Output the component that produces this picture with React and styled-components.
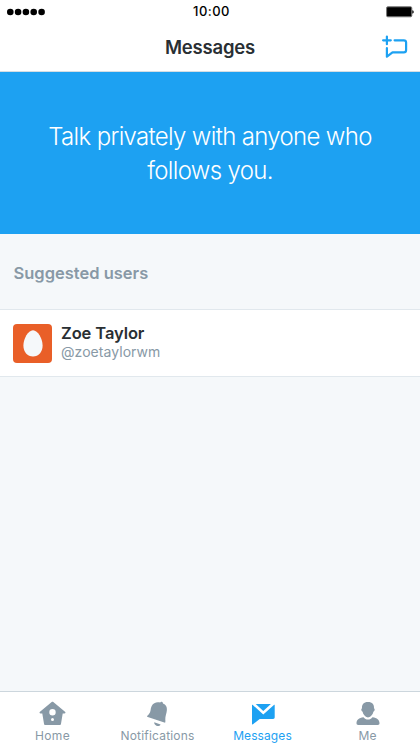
import styled, { createGlobalStyle } from 'styled-components';

const GlobalStyle = createGlobalStyle`
  * {
    box-sizing: border-box;
  }

  body {
    margin: 0;
    background: #f5f8fa;
    font-family: Inter, "Liberation Sans", sans-serif;
  }
`;

const HomeIcon = () => (
  <TabIcon viewBox="0 0 29 28">
    <path
      fillRule="evenodd"
      d="M13.700 2c.5-.4 1.100-.4 1.600 0L27 11.700c.9.8.4 1.700-.6 1.700h-1.700l-1.700 10.400c-.1.800-.6 1.200-1.300 1.200H7.300c-.7 0-1.200-.4-1.300-1.200L4.300 13.400H2.600c-1 0-1.500-.9-.6-1.700zM14.500 9.100a3.200 3.200 0 1 0 0 6.400 3.200 3.200 0 0 0 0-6.400zM14.500 17.900a1.500 1.500 0 1 0 0 3 1.500 1.500 0 0 0 0-3z"
    />
  </TabIcon>
);

const BellIcon = () => (
  <TabIcon viewBox="0 0 29 28">
    <path d="M17.2 2.600c.5-1.300 2.900-.8 2.800.9 2.900 1.100 4.100 3.400 3.900 6.500-.2 3.600-1.800 6.200-1.600 9.600.1 1.200.2 2.100-.2 3.200L4 16.700c.2-1.100 1.200-1.700 2-2.700 2.100-2.500 1.200-5.300 2.700-8.100 1.700-3.100 5.200-4.300 8.500-3.300z" />
    <path d="M11.200 22.300l6.400 2.100c-.7 1.500-2.200 2-3.700 1.500-1.600-.5-2.800-1.900-2.700-3.600z" />
  </TabIcon>
);

const EnvelopeIcon = () => (
  <TabIcon viewBox="0 0 29 28">
    <path d="M7.700 3.900h15.200l-7.600 7.100z" />
    <path d="M4 5.200c0-.4.500-.5.800-.2l10.500 9.600L25.900 5c.4-.3.800-.2.800.2v12.100c0 1-.6 1.600-1.600 1.600H11.700L5 24.200c-.5.400-1 .2-1-.4z" />
  </TabIcon>
);

const PersonIcon = () => (
  <TabIcon viewBox="0 0 29 28">
    <path d="M15 2c4.400 0 6.300 2.700 6 6.300 1.200.4.800 3-.6 3.400-.6 2.600-2.200 5-5.400 5.900-3.200-.9-4.800-3.300-5.400-5.900-1.400-.4-1.800-3-.6-3.400C8.700 4.700 10.600 2 15 2z" />
    <path d="M10.500 17.200c1.200 1.600 2.700 2.400 4.500 2.400s3.300-.8 4.500-2.400c4.600.8 7 2.500 7 6.100 0 1.100-.6 1.700-1.700 1.700H5.200c-1.100 0-1.700-.6-1.700-1.700 0-3.600 2.400-5.300 7-6.100z" />
  </TabIcon>
);

const tabs = [
  { label: 'Home', icon: HomeIcon, spacing: '0.35px' },
  { label: 'Notifications', icon: BellIcon, spacing: '0.2px' },
  { label: 'Messages', icon: EnvelopeIcon, active: true, spacing: '0.1px' },
  { label: 'Me', icon: PersonIcon, spacing: '0px' },
];

const App = () => {
  return (
    <Screen>
      <GlobalStyle />
      <StatusBar>
        <Signal viewBox="0 0 40 8">
          {[4.3, 12.1, 19.9, 27.7, 35.6].map((x) => (
            <circle key={x} cx={x} cy="4" r="3.3" />
          ))}
        </Signal>
        <Time>10:00</Time>
        <Battery viewBox="0 0 28 12">
          <rect x="0.6" y="0.8" width="25.2" height="10" rx="1.2" fill="#000" stroke="#777" strokeWidth="1" />
          <path d="M26.300 4.200c1.900.3 1.900 3.100 0 3.400z" />
        </Battery>
      </StatusBar>
      <Header>
        <Title>Messages</Title>
        <ComposeIcon viewBox="0 0 28 26">
          <path d="M5.900 2.500v7.700M2.100 6.300h7.700" />
          <path d="M13.600 6.300h9.200c1.500 0 2.300.8 2.300 2.300v7.300c0 1.600-.8 2.400-2.300 2.400H11.500l-5.600 4.400v-8.500" />
        </ComposeIcon>
      </Header>
      <Banner>
        <BannerLine>Talk privately with anyone who</BannerLine>
        <BannerLine>follows you.</BannerLine>
      </Banner>
      <SectionTitle>Suggested users</SectionTitle>
      <UserRow>
        <Avatar>
          <Egg viewBox="0 0 20 27">
            <path d="M10 .3c4.800 0 9.600 8.500 9.600 15.200 0 6.500-4 11-9.600 11s-9.600-4.500-9.600-11C.4 8.800 5.200.3 10 .3z" />
          </Egg>
        </Avatar>
        <UserText>
          <UserName>Zoe Taylor</UserName>
          <Handle>@zoetaylorwm</Handle>
        </UserText>
      </UserRow>
      <Spacer />
      <TabBar>
        {tabs.map(({ label, icon: Icon, active, spacing }) => (
          <Tab key={label} $active={active}>
            <Icon />
            <TabLabel $spacing={spacing}>{label}</TabLabel>
          </Tab>
        ))}
      </TabBar>
    </Screen>
  );
};

const Screen = styled.div`
  display: flex;
  flex-direction: column;
  width: 420px;
  height: 747px;
  overflow: hidden;
  background: #f5f8fa;
`;

const StatusBar = styled.div`
  display: grid;
  grid-template-columns: 1fr auto 1fr;
  align-items: center;
  height: 23px;
  padding: 0 6px;
  background: #fff;
`;

const Signal = styled.svg`
  width: 40px;
  height: 8px;
`;

const Time = styled.div`
  padding-left: 3px;
  font-size: 13px;
  font-weight: 500;
  line-height: 23px;
  letter-spacing: 0.5px;
  color: #000;
`;

const Battery = styled.svg`
  justify-self: end;
  width: 28px;
  height: 12px;
`;

const Header = styled.header`
  display: grid;
  grid-template-columns: 1fr auto 1fr;
  align-items: center;
  height: 49px;
  padding: 0 11px;
  border-bottom: 1px solid #d5dde3;
  background: #fff;
`;

const Title = styled.h1`
  grid-column: 2;
  margin: 0;
  font-size: 18.5px;
  font-weight: 600;
  line-height: 24px;
  letter-spacing: -0.2px;
  color: #292f33;
`;

const ComposeIcon = styled.svg`
  justify-self: end;
  width: 28px;
  height: 26px;
  fill: none;
  stroke: #1da1f2;
  stroke-width: 2.2;
  stroke-linecap: round;
  stroke-linejoin: round;
`;

const Banner = styled.div`
  height: 162px;
  padding-top: 48px;
  background: #1da1f2;
`;

const BannerLine = styled.div`
  font-size: 24px;
  font-weight: 300;
  line-height: 34px;
  letter-spacing: -0.67px;
  text-align: center;
  white-space: nowrap;
  color: #fff;
`;

const SectionTitle = styled.h2`
  height: 75px;
  margin: 0;
  padding: 2px 13.5px 0;
  font-size: 16.5px;
  font-weight: 600;
  line-height: 75px;
  color: #8899a6;
`;

const UserRow = styled.div`
  display: flex;
  height: 68px;
  padding: 14px 13px;
  gap: 9px;
  border-top: 1px solid #e1e8ed;
  border-bottom: 1px solid #e1e8ed;
  background: #fff;
`;

const Avatar = styled.div`
  display: flex;
  align-items: center;
  justify-content: center;
  width: 39px;
  height: 39px;
  border-radius: 4px;
  background: #e95f28;
`;

const Egg = styled.svg`
  width: 20px;
  height: 27px;
  fill: #f5f8fa;
`;

const UserText = styled.div`
  display: flex;
  flex-direction: column;
`;

const UserName = styled.div`
  font-size: 16.5px;
  font-weight: 600;
  line-height: 19px;
  letter-spacing: -0.1px;
  color: #292f33;
`;

const Handle = styled.div`
  font-size: 14px;
  line-height: 18px;
  letter-spacing: 0.05px;
  color: #8899a6;
`;

const Spacer = styled.div`
  flex: 1;
`;

const TabBar = styled.nav`
  display: grid;
  grid-template-columns: repeat(4, 1fr);
  height: 56px;
  border-top: 1px solid #ccd6dd;
  background: #fff;
`;

const Tab = styled.div`
  display: flex;
  flex-direction: column;
  align-items: center;
  padding-top: 8px;
  color: ${({ $active }) => ($active ? '#1da1f2' : '#8899a6')};
`;

const TabIcon = styled.svg`
  width: 29px;
  height: 28px;
  fill: currentColor;
`;

const TabLabel = styled.div`
  font-size: 12px;
  line-height: 16px;
  letter-spacing: ${({ $spacing }) => $spacing};
`;

export default App;
